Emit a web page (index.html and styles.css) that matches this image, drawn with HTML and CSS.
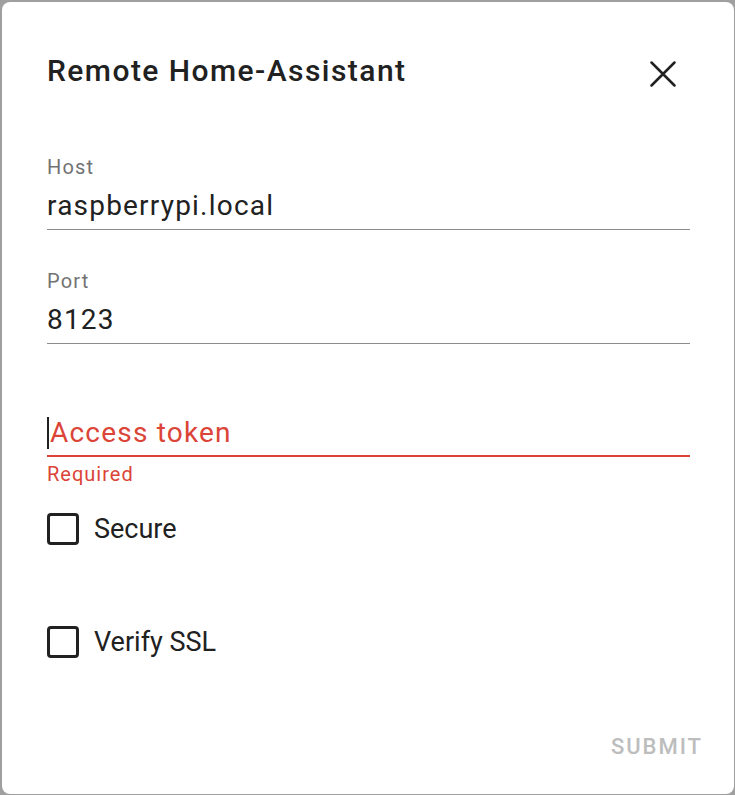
FILE: index.html
```html
<!DOCTYPE html>
<html lang="en">
<head>
<meta charset="utf-8">
<title>Remote Home-Assistant</title>
<link rel="stylesheet" href="styles.css">
</head>
<body>
<div class="dialog">
  <div class="header">
    <h2 class="title">Remote Home-Assistant</h2>
    <button class="close" aria-label="Close">
      <svg width="26" height="26" viewBox="0 0 26 26"><path d="M1.5 1.5 L24.5 24.5 M24.5 1.5 L1.5 24.5" stroke="#212121" stroke-width="2.5" stroke-linecap="round" fill="none"/></svg>
    </button>
  </div>
  <div class="field">
    <div class="label">Host</div>
    <div class="value">raspberrypi.local</div>
  </div>
  <div class="field">
    <div class="label">Port</div>
    <div class="value">8123</div>
  </div>
  <div class="field invalid">
    <div class="label"></div>
    <div class="value"><span class="caret"></span>Access token</div>
  </div>
  <div class="helper">Required</div>
  <label class="check first"><span class="box"></span><span class="check-text">Secure</span></label>
  <label class="check second"><span class="box"></span><span class="check-text">Verify SSL</span></label>
  <div class="actions">
    <button class="submit" disabled>Submit</button>
  </div>
</div>
</body>
</html>
```
FILE: styles.css
```css
html, body {
  margin: 0;
  padding: 0;
}
body {
  background: #9f9f9f;
  font-family: Roboto, "Noto Sans", sans-serif;
  color: #212121;
  height: 795px;
  overflow: hidden;
}
.dialog {
  box-sizing: border-box;
  margin: 2px 1px 0 2px;
  height: 792px;
  background: #fff;
  border-radius: 8px;
  padding: 0 44px 0 45px;
  display: flex;
  flex-direction: column;
}
.header {
  display: flex;
  justify-content: space-between;
  align-items: flex-start;
  margin-top: 51px;
}
.title {
  margin: 0;
  font-size: 30px;
  line-height: 36px;
  font-weight: 500;
  letter-spacing: 1.45px;
  color: #212121;
}
.close {
  margin: 8px 14px 0 0;
  padding: 0;
  border: 0;
  background: none;
  width: 26px;
  height: 26px;
  display: block;
}
.close svg { display: block; }
.field {
  margin-top: 68px;
  border-bottom: 1px solid #8c8c8c;
}
.field + .field { margin-top: 41px; }
.label {
  font-size: 20px;
  line-height: 20px;
  height: 20px;
  letter-spacing: 1.2px;
  color: #727272;
}
.value {
  margin-top: 13px;
  margin-bottom: 7px;
  font-size: 28px;
  line-height: 32px;
  letter-spacing: 1.2px;
  color: #212121;
  display: flex;
  align-items: center;
}
.invalid {
  border-bottom: 2px solid #db4437;
}
.invalid .value {
  color: #db4437;
  margin-top: 12px;
  margin-bottom: 6px;
}
.caret {
  display: inline-block;
  width: 2px;
  height: 32px;
  background: #212121;
  margin-right: 1px;
}
.helper {
  margin-top: 7px;
  font-size: 20px;
  line-height: 20px;
  letter-spacing: 1px;
  color: #db4437;
}
.check {
  display: flex;
  align-items: center;
  gap: 15px;
  height: 32px;
}
.check.first { margin-top: 29px; }
.check.second { margin-top: 81px; }
.box {
  box-sizing: border-box;
  width: 32px;
  height: 32px;
  border: 3px solid #212121;
  border-radius: 4px;
}
.check-text {
  font-size: 27px;
  color: #212121;
}
.actions {
  display: flex;
  justify-content: flex-end;
  margin-top: 76px;
  margin-right: -13px;
}
.submit {
  border: 0;
  background: none;
  padding: 0;
  font-family: Roboto, sans-serif;
  font-size: 22px;
  font-weight: 500;
  letter-spacing: 0.09em;
  text-transform: uppercase;
  color: #bdbdbd;
  line-height: 26px;
}
```
